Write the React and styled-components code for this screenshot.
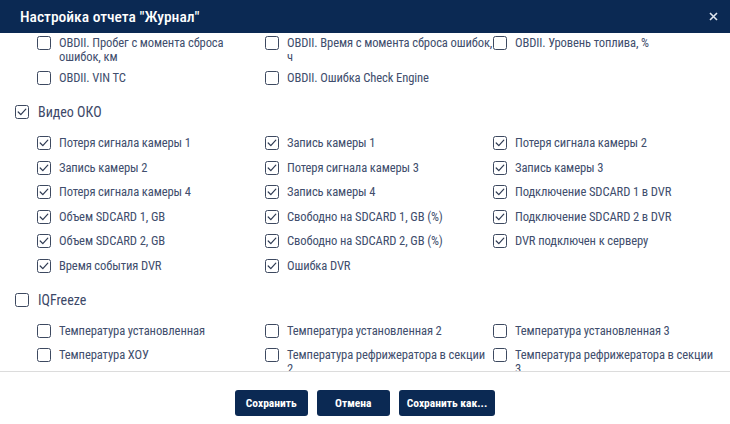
import styled, { createGlobalStyle } from "styled-components";

const GlobalStyle = createGlobalStyle`
  html, body {
    margin: 0;
    padding: 0;
    background: #fff;
  }
  body {
    font-family: "Roboto Condensed", "Liberation Sans Narrow", "DejaVu Sans Condensed", Roboto, sans-serif;
  }
  * {
    box-sizing: border-box;
  }
`;

const groups = [
  {
    id: "obd",
    title: null,
    items: [
      { label: "OBDII. Пробег с момента сброса ошибок, км" },
      { label: "OBDII. Время с момента сброса ошибок, ч" },
      { label: "OBDII. Уровень топлива, %" },
      { label: "OBDII. VIN TC" },
      { label: "OBDII. Ошибка Check Engine" },
    ],
  },
  {
    id: "oko",
    title: "Видео ОКО",
    checked: true,
    items: [
      "Потеря сигнала камеры 1",
      "Запись камеры 1",
      "Потеря сигнала камеры 2",
      "Запись камеры 2",
      "Потеря сигнала камеры 3",
      "Запись камеры 3",
      "Потеря сигнала камеры 4",
      "Запись камеры 4",
      "Подключение SDCARD 1 в DVR",
      "Объем SDCARD 1, GB",
      "Свободно на SDCARD 1, GB (%)",
      "Подключение SDCARD 2 в DVR",
      "Объем SDCARD 2, GB",
      "Свободно на SDCARD 2, GB (%)",
      "DVR подключен к серверу",
      "Время события DVR",
      "Ошибка DVR",
    ].map((label) => ({ label, checked: true })),
  },
  {
    id: "iqf",
    title: "IQFreeze",
    checked: false,
    items: [
      "Температура установленная",
      "Температура установленная 2",
      "Температура установленная 3",
      "Температура ХОУ",
      "Температура рефрижератора в секции 2",
      "Температура рефрижератора в секции 3",
      "Температура рефрижератора в секции 4",
      "Температура рефрижератора в секции 5",
    ].map((label) => ({ label })),
  },
];

const Check = ({ checked, head }) => (
  <Box $head={head}>
    {checked && (
      <svg width="12" height="12" viewBox="0 0 12 12">
        <polyline
          points="2.2,6 4.8,8.7 9.8,3.2"
          fill="none"
          stroke="#2e3a52"
          strokeWidth="1.2"
          strokeLinecap="round"
          strokeLinejoin="round"
        />
      </svg>
    )}
  </Box>
);

const App = () => {
  return (
    <>
      <GlobalStyle />
      <Dialog>
        <Header>
          <Title>Настройка отчета "Журнал"</Title>
          <Close aria-label="close">
            <svg width="9" height="9" viewBox="0 0 9 9">
              <path d="M1 1L8 8M8 1L1 8" stroke="#dfe5ee" strokeWidth="1.6" />
            </svg>
          </Close>
        </Header>
        <Body>
          {groups.map((group) => (
            <Group key={group.id}>
              {group.title && (
                <GroupHead>
                  <Check checked={group.checked} head />
                  <GroupTitle>{group.title}</GroupTitle>
                </GroupHead>
              )}
              <Grid>
                {group.items.map((item) => (
                  <Item key={item.label}>
                    <Check checked={item.checked} />
                    <Label>{item.label}</Label>
                  </Item>
                ))}
              </Grid>
            </Group>
          ))}
        </Body>
        <Footer>
          <Button>Сохранить</Button>
          <Button>Отмена</Button>
          <Button>Сохранить как...</Button>
        </Footer>
      </Dialog>
    </>
  );
};

export default App;

const Dialog = styled.div`
  width: 730px;
  height: 424px;
  display: flex;
  flex-direction: column;
  background: #fff;
  overflow: hidden;
`;

const Header = styled.div`
  height: 33px;
  flex: none;
  background: #0b2953;
  display: flex;
  align-items: center;
  justify-content: space-between;
  padding: 0 8px 0 20px;
`;

const Title = styled.div`
  color: #fff;
  font-size: 15.5px;
  font-weight: 500;
`;

const Close = styled.button`
  border: none;
  background: none;
  padding: 4px;
  display: flex;
  cursor: pointer;
`;

const Body = styled.div`
  flex: 1;
  overflow: hidden;
  padding: 1px 9px 0 15px;
  display: flex;
  flex-direction: column;
  gap: 13.5px;
`;

const Group = styled.div`
  display: flex;
  flex-direction: column;
  gap: 12px;
`;

const GroupHead = styled.div`
  display: flex;
  align-items: center;
  gap: 9px;
  min-height: 20px;
`;

const GroupTitle = styled.span`
  font-size: 14px;
  color: #3c4868;
`;

const Grid = styled.div`
  display: grid;
  grid-template-columns: repeat(3, 228px);
  row-gap: 5px;
  padding-left: 22px;
`;

const Item = styled.label`
  display: flex;
  align-items: flex-start;
  gap: 8px;
  min-height: 19.5px;
`;

const Box = styled.span`
  flex: none;
  width: 14px;
  height: 14px;
  margin-top: ${(p) => (p.$head ? 0 : 2)}px;
  border: 1.3px solid #3d4960;
  border-radius: 2.5px;
  display: flex;
  align-items: center;
  justify-content: center;
  background: #fff;
`;

const Label = styled.span`
  font-size: 12.6px;
  letter-spacing: -0.12px;
  line-height: 14px;
  padding-top: 2px;
  color: #414e6d;
`;

const Footer = styled.div`
  flex: none;
  height: 53px;
  border-top: 1px solid #dcdcdc;
  display: flex;
  align-items: flex-start;
  justify-content: center;
  gap: 9px;
  padding-top: 18px;
`;

const Button = styled.button`
  height: 26px;
  min-width: 73px;
  padding: 0 8px;
  background: #0b2953;
  color: #fff;
  border: none;
  border-radius: 3px;
  font-family: inherit;
  font-size: 11.5px;
  font-weight: 700;
  cursor: pointer;
`;
